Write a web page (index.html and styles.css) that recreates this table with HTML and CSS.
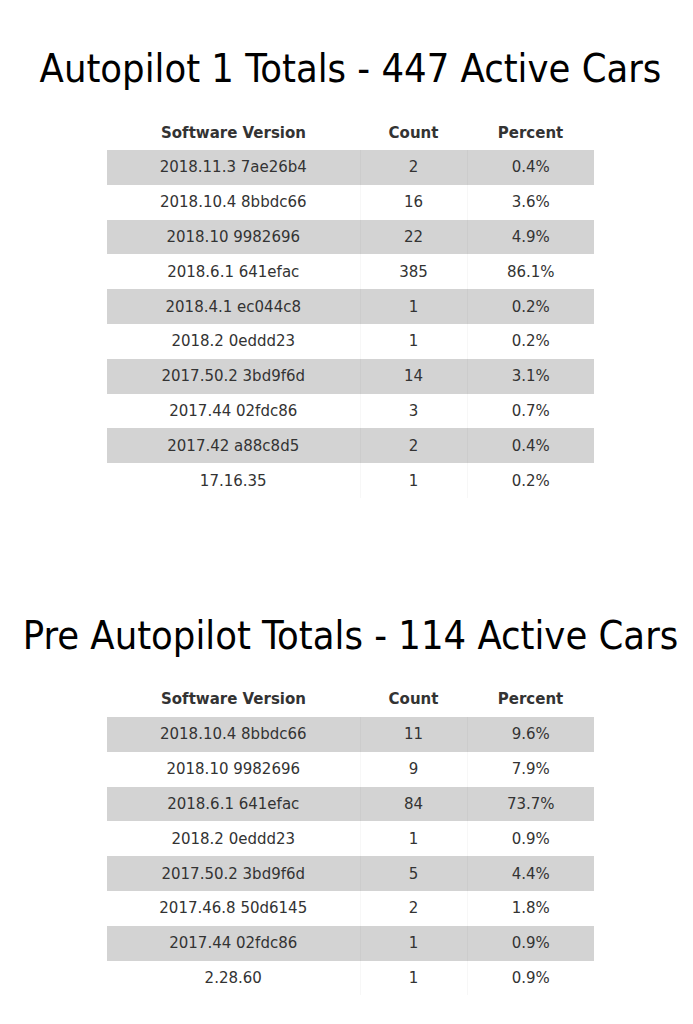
FILE: index.html
```html
<!DOCTYPE html>
<html>
<head>
<meta charset="utf-8">
<link rel="stylesheet" href="styles.css">
</head>
<body>
<section class="block first">
  <h1 class="title">Autopilot 1 Totals - 447 Active Cars</h1>
  <table class="stats">
    <thead>
      <tr><th class="c1">Software Version</th><th class="c2">Count</th><th class="c3">Percent</th></tr>
    </thead>
    <tbody>
      <tr><td>2018.11.3 7ae26b4</td><td>2</td><td>0.4%</td></tr>
      <tr><td>2018.10.4 8bbdc66</td><td>16</td><td>3.6%</td></tr>
      <tr><td>2018.10 9982696</td><td>22</td><td>4.9%</td></tr>
      <tr><td>2018.6.1 641efac</td><td>385</td><td>86.1%</td></tr>
      <tr><td>2018.4.1 ec044c8</td><td>1</td><td>0.2%</td></tr>
      <tr><td>2018.2 0eddd23</td><td>1</td><td>0.2%</td></tr>
      <tr><td>2017.50.2 3bd9f6d</td><td>14</td><td>3.1%</td></tr>
      <tr><td>2017.44 02fdc86</td><td>3</td><td>0.7%</td></tr>
      <tr><td>2017.42 a88c8d5</td><td>2</td><td>0.4%</td></tr>
      <tr><td>17.16.35</td><td>1</td><td>0.2%</td></tr>
    </tbody>
  </table>
</section>
<section class="block second">
  <h1 class="title">Pre Autopilot Totals - 114 Active Cars</h1>
  <table class="stats">
    <thead>
      <tr><th class="c1">Software Version</th><th class="c2">Count</th><th class="c3">Percent</th></tr>
    </thead>
    <tbody>
      <tr><td>2018.10.4 8bbdc66</td><td>11</td><td>9.6%</td></tr>
      <tr><td>2018.10 9982696</td><td>9</td><td>7.9%</td></tr>
      <tr><td>2018.6.1 641efac</td><td>84</td><td>73.7%</td></tr>
      <tr><td>2018.2 0eddd23</td><td>1</td><td>0.9%</td></tr>
      <tr><td>2017.50.2 3bd9f6d</td><td>5</td><td>4.4%</td></tr>
      <tr><td>2017.46.8 50d6145</td><td>2</td><td>1.8%</td></tr>
      <tr><td>2017.44 02fdc86</td><td>1</td><td>0.9%</td></tr>
      <tr><td>2.28.60</td><td>1</td><td>0.9%</td></tr>
    </tbody>
  </table>
</section>
</body>
</html>
```
FILE: styles.css
```css
html, body {
  margin: 0;
  padding: 0;
  background: #fff;
}
body {
  padding-left: 8px;
  font-family: "DejaVu Sans", Verdana, sans-serif;
  color: #333;
}
.block {
  display: flex;
  flex-direction: column;
  align-items: center;
}
.first {
  padding-top: 46px;
}
.second {
  padding-top: 115px;
}
.title {
  margin: 0;
  font-family: "DejaVu Sans Condensed", "DejaVu Sans", sans-serif;
  font-weight: normal;
  font-size: 39.5px;
  line-height: 44px;
  color: #000;
  white-space: nowrap;
}
.stats {
  margin-top: 25px;
  width: 487px;
  border-collapse: collapse;
  font-size: 15px;
}
.stats th {
  font-size: 15px;
  font-weight: bold;
  height: 35px;
  padding: 0;
  text-align: center;
  color: #333;
}
.stats td {
  height: 34.8px;
  padding: 0;
  text-align: center;
  color: #333;
}
.c1 { width: 253px; }
.c2 { width: 107px; }
.c3 { width: 127px; }
.stats tbody tr:nth-child(odd) {
  background: #d3d3d3;
}
.stats tbody td + td {
  border-left: 1px solid rgba(0,0,0,0.03);
}
```
